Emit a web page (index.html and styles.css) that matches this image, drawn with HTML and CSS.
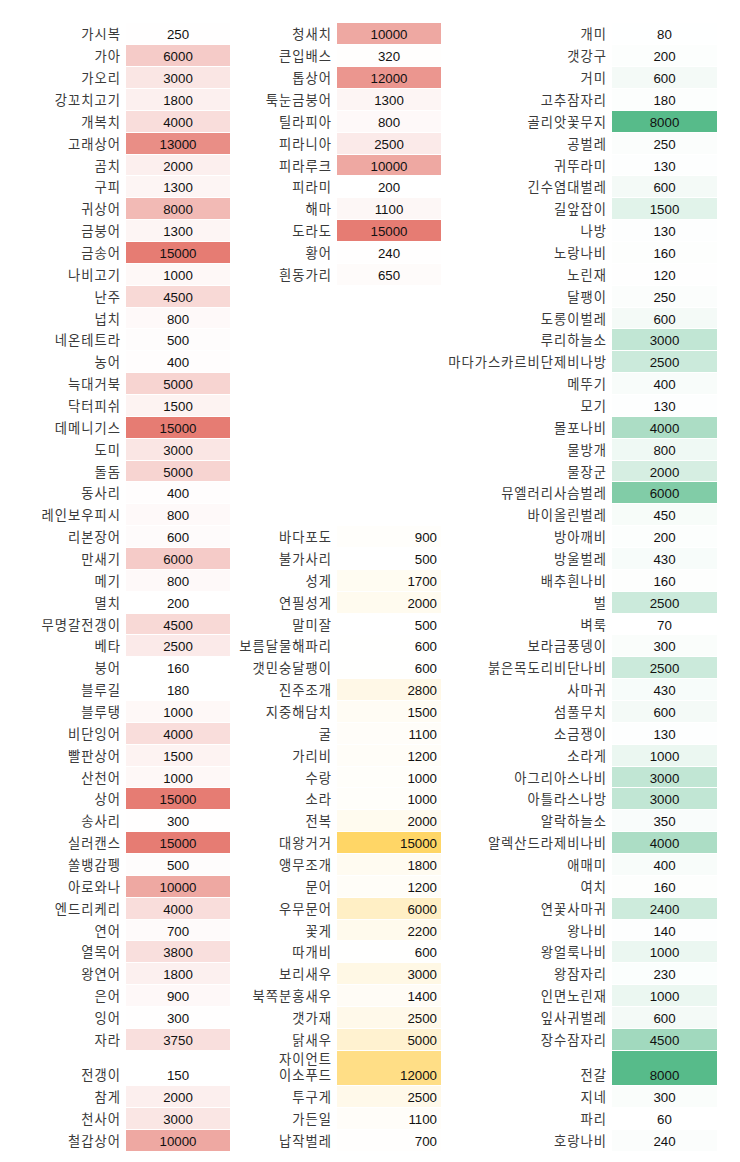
FILE: index.html
```html
<!DOCTYPE html>
<html lang="ko">
<head>
<meta charset="utf-8">
<title>가격표</title>
<link rel="stylesheet" href="styles.css">
</head>
<body>
<div class="sheet">
<div class="row"><div class="n">가시복</div><div class="v f" style="--t:1%">250</div><div class="n">청새치</div><div class="v f" style="--t:66.3%">10000</div><div class="n">개미</div><div class="v i" style="--t:0.3%">80</div></div>
<div class="row"><div class="n">가아</div><div class="v f" style="--t:39.4%">6000</div><div class="n">큰입배스</div><div class="v f" style="--t:1.1%">320</div><div class="n">갯강구</div><div class="v i" style="--t:1.8%">200</div></div>
<div class="row"><div class="n">가오리</div><div class="v f" style="--t:19.2%">3000</div><div class="n">톱상어</div><div class="v f" style="--t:79.8%">12000</div><div class="n">거미</div><div class="v i" style="--t:6.8%">600</div></div>
<div class="row"><div class="n">강꼬치고기</div><div class="v f" style="--t:11.1%">1800</div><div class="n">툭눈금붕어</div><div class="v f" style="--t:7.7%">1300</div><div class="n">고추잠자리</div><div class="v i" style="--t:1.5%">180</div></div>
<div class="row"><div class="n">개복치</div><div class="v f" style="--t:25.9%">4000</div><div class="n">틸라피아</div><div class="v f" style="--t:4.4%">800</div><div class="n">골리앗꽃무지</div><div class="v i" style="--t:100%">8000</div></div>
<div class="row"><div class="n">고래상어</div><div class="v f" style="--t:86.5%">13000</div><div class="n">피라니아</div><div class="v f" style="--t:15.8%">2500</div><div class="n">공벌레</div><div class="v i" style="--t:2.4%">250</div></div>
<div class="row"><div class="n">곰치</div><div class="v f" style="--t:12.5%">2000</div><div class="n">피라루크</div><div class="v f" style="--t:66.3%">10000</div><div class="n">귀뚜라미</div><div class="v i" style="--t:0.9%">130</div></div>
<div class="row"><div class="n">구피</div><div class="v f" style="--t:7.7%">1300</div><div class="n">피라미</div><div class="v f" style="--t:0.3%">200</div><div class="n">긴수염대벌레</div><div class="v i" style="--t:6.8%">600</div></div>
<div class="row"><div class="n">귀상어</div><div class="v f" style="--t:52.9%">8000</div><div class="n">해마</div><div class="v f" style="--t:6.4%">1100</div><div class="n">길앞잡이</div><div class="v i" style="--t:18.1%">1500</div></div>
<div class="row"><div class="n">금붕어</div><div class="v f" style="--t:7.7%">1300</div><div class="n">도라도</div><div class="v f" style="--t:100%">15000</div><div class="n">나방</div><div class="v i" style="--t:0.9%">130</div></div>
<div class="row"><div class="n">금송어</div><div class="v f" style="--t:100%">15000</div><div class="n">황어</div><div class="v f" style="--t:0.6%">240</div><div class="n">노랑나비</div><div class="v i" style="--t:1.3%">160</div></div>
<div class="row"><div class="n">나비고기</div><div class="v f" style="--t:5.7%">1000</div><div class="n">흰동가리</div><div class="v f" style="--t:3.4%">650</div><div class="n">노린재</div><div class="v i" style="--t:0.8%">120</div></div>
<div class="row"><div class="n">난주</div><div class="v f" style="--t:29.3%">4500</div><div class="n"></div><div class="v"></div><div class="n">달팽이</div><div class="v i" style="--t:2.4%">250</div></div>
<div class="row"><div class="n">넙치</div><div class="v f" style="--t:4.4%">800</div><div class="n"></div><div class="v"></div><div class="n">도롱이벌레</div><div class="v i" style="--t:6.8%">600</div></div>
<div class="row"><div class="n">네온테트라</div><div class="v f" style="--t:2.4%">500</div><div class="n"></div><div class="v"></div><div class="n">루리하늘소</div><div class="v i" style="--t:37%">3000</div></div>
<div class="row"><div class="n">농어</div><div class="v f" style="--t:1.7%">400</div><div class="n"></div><div class="v"></div><div class="n">마다가스카르비단제비나방</div><div class="v i" style="--t:30.7%">2500</div></div>
<div class="row"><div class="n">늑대거북</div><div class="v f" style="--t:32.7%">5000</div><div class="n"></div><div class="v"></div><div class="n">메뚜기</div><div class="v i" style="--t:4.3%">400</div></div>
<div class="row"><div class="n">닥터피쉬</div><div class="v f" style="--t:9.1%">1500</div><div class="n"></div><div class="v"></div><div class="n">모기</div><div class="v i" style="--t:0.9%">130</div></div>
<div class="row"><div class="n">데메니기스</div><div class="v f" style="--t:100%">15000</div><div class="n"></div><div class="v"></div><div class="n">몰포나비</div><div class="v i" style="--t:49.6%">4000</div></div>
<div class="row"><div class="n">도미</div><div class="v f" style="--t:19.2%">3000</div><div class="n"></div><div class="v"></div><div class="n">물방개</div><div class="v i" style="--t:9.3%">800</div></div>
<div class="row"><div class="n">돌돔</div><div class="v f" style="--t:32.7%">5000</div><div class="n"></div><div class="v"></div><div class="n">물장군</div><div class="v i" style="--t:24.4%">2000</div></div>
<div class="row"><div class="n">동사리</div><div class="v f" style="--t:1.7%">400</div><div class="n"></div><div class="v"></div><div class="n">뮤엘러리사슴벌레</div><div class="v i" style="--t:74.8%">6000</div></div>
<div class="row"><div class="n">레인보우피시</div><div class="v f" style="--t:4.4%">800</div><div class="n"></div><div class="v"></div><div class="n">바이올린벌레</div><div class="v i" style="--t:4.9%">450</div></div>
<div class="row"><div class="n">리본장어</div><div class="v f" style="--t:3%">600</div><div class="n">바다포도</div><div class="v s" style="--t:2.8%">900</div><div class="n">방아깨비</div><div class="v i" style="--t:1.8%">200</div></div>
<div class="row"><div class="n">만새기</div><div class="v f" style="--t:39.4%">6000</div><div class="n">불가사리</div><div class="v s">500</div><div class="n">방울벌레</div><div class="v i" style="--t:4.7%">430</div></div>
<div class="row"><div class="n">메기</div><div class="v f" style="--t:4.4%">800</div><div class="n">성게</div><div class="v s" style="--t:8.3%">1700</div><div class="n">배추흰나비</div><div class="v i" style="--t:1.3%">160</div></div>
<div class="row"><div class="n">멸치</div><div class="v f" style="--t:0.3%">200</div><div class="n">연필성게</div><div class="v s" style="--t:10.3%">2000</div><div class="n">벌</div><div class="v i" style="--t:30.7%">2500</div></div>
<div class="row"><div class="n">무명갈전갱이</div><div class="v f" style="--t:29.3%">4500</div><div class="n">말미잘</div><div class="v s">500</div><div class="n">벼룩</div><div class="v i" style="--t:0.1%">70</div></div>
<div class="row"><div class="n">베타</div><div class="v f" style="--t:15.8%">2500</div><div class="n">보름달물해파리</div><div class="v s" style="--t:0.7%">600</div><div class="n">보라금풍뎅이</div><div class="v i" style="--t:3%">300</div></div>
<div class="row"><div class="n">붕어</div><div class="v f">160</div><div class="n">갯민숭달팽이</div><div class="v s" style="--t:0.7%">600</div><div class="n">붉은목도리비단나비</div><div class="v i" style="--t:30.7%">2500</div></div>
<div class="row"><div class="n">블루길</div><div class="v f" style="--t:0.2%">180</div><div class="n">진주조개</div><div class="v s" style="--t:15.9%">2800</div><div class="n">사마귀</div><div class="v i" style="--t:4.7%">430</div></div>
<div class="row"><div class="n">블루탱</div><div class="v f" style="--t:5.7%">1000</div><div class="n">지중해담치</div><div class="v s" style="--t:6.9%">1500</div><div class="n">섬풀무치</div><div class="v i" style="--t:6.8%">600</div></div>
<div class="row"><div class="n">비단잉어</div><div class="v f" style="--t:25.9%">4000</div><div class="n">굴</div><div class="v s" style="--t:4.1%">1100</div><div class="n">소금쟁이</div><div class="v i" style="--t:0.9%">130</div></div>
<div class="row"><div class="n">빨판상어</div><div class="v f" style="--t:9.1%">1500</div><div class="n">가리비</div><div class="v s" style="--t:4.8%">1200</div><div class="n">소라게</div><div class="v i" style="--t:11.8%">1000</div></div>
<div class="row"><div class="n">산천어</div><div class="v f" style="--t:5.7%">1000</div><div class="n">수랑</div><div class="v s" style="--t:3.4%">1000</div><div class="n">아그리아스나비</div><div class="v i" style="--t:37%">3000</div></div>
<div class="row"><div class="n">상어</div><div class="v f" style="--t:100%">15000</div><div class="n">소라</div><div class="v s" style="--t:3.4%">1000</div><div class="n">아틀라스나방</div><div class="v i" style="--t:37%">3000</div></div>
<div class="row"><div class="n">송사리</div><div class="v f" style="--t:1%">300</div><div class="n">전복</div><div class="v s" style="--t:10.3%">2000</div><div class="n">알락하늘소</div><div class="v i" style="--t:3.7%">350</div></div>
<div class="row"><div class="n">실러캔스</div><div class="v f" style="--t:100%">15000</div><div class="n">대왕거거</div><div class="v s" style="--t:100%">15000</div><div class="n">알렉산드라제비나비</div><div class="v i" style="--t:49.6%">4000</div></div>
<div class="row"><div class="n">쏠뱅감펭</div><div class="v f" style="--t:2.4%">500</div><div class="n">앵무조개</div><div class="v s" style="--t:9%">1800</div><div class="n">애매미</div><div class="v i" style="--t:4.3%">400</div></div>
<div class="row"><div class="n">아로와나</div><div class="v f" style="--t:66.3%">10000</div><div class="n">문어</div><div class="v s" style="--t:4.8%">1200</div><div class="n">여치</div><div class="v i" style="--t:1.3%">160</div></div>
<div class="row"><div class="n">엔드리케리</div><div class="v f" style="--t:25.9%">4000</div><div class="n">우무문어</div><div class="v s" style="--t:37.9%">6000</div><div class="n">연꽃사마귀</div><div class="v i" style="--t:29.5%">2400</div></div>
<div class="row"><div class="n">연어</div><div class="v f" style="--t:3.7%">700</div><div class="n">꽃게</div><div class="v s" style="--t:11.7%">2200</div><div class="n">왕나비</div><div class="v i" style="--t:1%">140</div></div>
<div class="row"><div class="n">열목어</div><div class="v f" style="--t:24.6%">3800</div><div class="n">따개비</div><div class="v s" style="--t:0.7%">600</div><div class="n">왕얼룩나비</div><div class="v i" style="--t:11.8%">1000</div></div>
<div class="row"><div class="n">왕연어</div><div class="v f" style="--t:11.1%">1800</div><div class="n">보리새우</div><div class="v s" style="--t:17.2%">3000</div><div class="n">왕잠자리</div><div class="v i" style="--t:2.1%">230</div></div>
<div class="row"><div class="n">은어</div><div class="v f" style="--t:5.1%">900</div><div class="n">북쪽분홍새우</div><div class="v s" style="--t:6.2%">1400</div><div class="n">인면노린재</div><div class="v i" style="--t:11.8%">1000</div></div>
<div class="row"><div class="n">잉어</div><div class="v f" style="--t:1%">300</div><div class="n">갯가재</div><div class="v s" style="--t:13.8%">2500</div><div class="n">잎사귀벌레</div><div class="v i" style="--t:6.8%">600</div></div>
<div class="row"><div class="n">자라</div><div class="v f" style="--t:24.2%">3750</div><div class="n">닭새우</div><div class="v s" style="--t:31%">5000</div><div class="n">장수잠자리</div><div class="v i" style="--t:55.9%">4500</div></div>
<div class="row"><div class="n">전갱이</div><div class="v f">150</div><div class="n">자이언트 이소푸드</div><div class="v s" style="--t:79.3%">12000</div><div class="n">전갈</div><div class="v i" style="--t:100%">8000</div></div>
<div class="row"><div class="n">참게</div><div class="v f" style="--t:12.5%">2000</div><div class="n">투구게</div><div class="v s" style="--t:13.8%">2500</div><div class="n">지네</div><div class="v i" style="--t:3%">300</div></div>
<div class="row"><div class="n">천사어</div><div class="v f" style="--t:19.2%">3000</div><div class="n">가든일</div><div class="v s" style="--t:4.1%">1100</div><div class="n">파리</div><div class="v i">60</div></div>
<div class="row"><div class="n">철갑상어</div><div class="v f" style="--t:66.3%">10000</div><div class="n">납작벌레</div><div class="v s" style="--t:1.4%">700</div><div class="n">호랑나비</div><div class="v i" style="--t:2.3%">240</div></div>
</div>
</body>
</html>
```

FILE: styles.css
```css
html, body {
  margin: 0;
  padding: 0;
  background: #ffffff;
}

body {
  font-family: "Liberation Sans", "Noto Sans CJK KR", sans-serif;
  font-size: 13.3px;
  color: #111111;
}

.sheet {
  display: grid;
  grid-template-columns: 126px 104px 107px 104px 171px 105px;
  grid-auto-rows: minmax(21.87px, auto);
  padding-top: 22.4px;
}

.row {
  display: contents;
}

.n,
.v {
  box-sizing: border-box;
  display: flex;
  align-items: flex-end;
  line-height: 16px;
  padding-top: 1.4px;
  padding-bottom: 0.9px;
  border-top: 1px solid #ffffff;
  min-width: 0;
}

.n {
  justify-content: flex-end;
  text-align: right;
  padding-right: 5px;
  letter-spacing: 1px;
  word-break: keep-all;
  color: #3a3a3a;
}

.v {
  justify-content: center;
  text-align: center;
}

.v.f {
  background: color-mix(in srgb, #e67c73 var(--t, 0%), #ffffff);
}

.v.s {
  justify-content: flex-end;
  text-align: right;
  padding-right: 4px;
  background: color-mix(in srgb, #ffd666 var(--t, 0%), #ffffff);
}

.v.i {
  background: color-mix(in srgb, #57bb8a var(--t, 0%), #ffffff);
}
```
